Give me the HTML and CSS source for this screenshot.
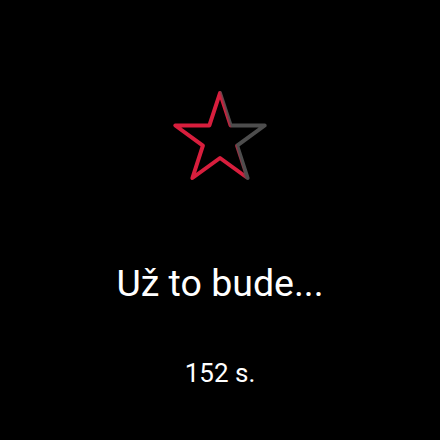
FILE: index.html
```html
<!DOCTYPE html>
<html>
<head>
<meta charset="utf-8">
<link rel="stylesheet" href="styles.css">
</head>
<body>
<main class="screen">
  <svg class="star" viewBox="170 88 100 100" width="100" height="100" aria-hidden="true">
    <defs>
      <linearGradient id="fill" gradientUnits="userSpaceOnUse" x1="228.6" y1="125.9" x2="231.4" y2="125.1">
        <stop offset="0" stop-color="#d81e3d"/>
        <stop offset="1" stop-color="#4d4d4d"/>
      </linearGradient>
    </defs>
    <polygon points="220,93 230.6,125.4 264.7,125.5 237.1,145.6 247.6,178 220,158 192.4,178 202.9,145.6 175.3,125.5 209.4,125.4"
      fill="none" stroke="url(#fill)" stroke-width="4" stroke-linejoin="round"/>
  </svg>
  <h1 class="title">Už to bude...</h1>
  <p class="timer">152 s.</p>
</main>
</body>
</html>
```
FILE: styles.css
```css
html, body {
  margin: 0;
  padding: 0;
  background: #000;
}
.screen {
  width: 440px;
  height: 440px;
  display: flex;
  flex-direction: column;
  align-items: center;
  font-family: Roboto, "Liberation Sans", sans-serif;
  color: #fff;
}
.star {
  display: block;
  margin-top: 88px;
}
.title {
  margin: 73px 0 0;
  font-size: 37.5px;
  font-weight: 400;
  line-height: 44px;
}
.timer {
  margin: 53px 0 0;
  font-size: 26px;
  font-weight: 400;
  line-height: 30px;
}
```
